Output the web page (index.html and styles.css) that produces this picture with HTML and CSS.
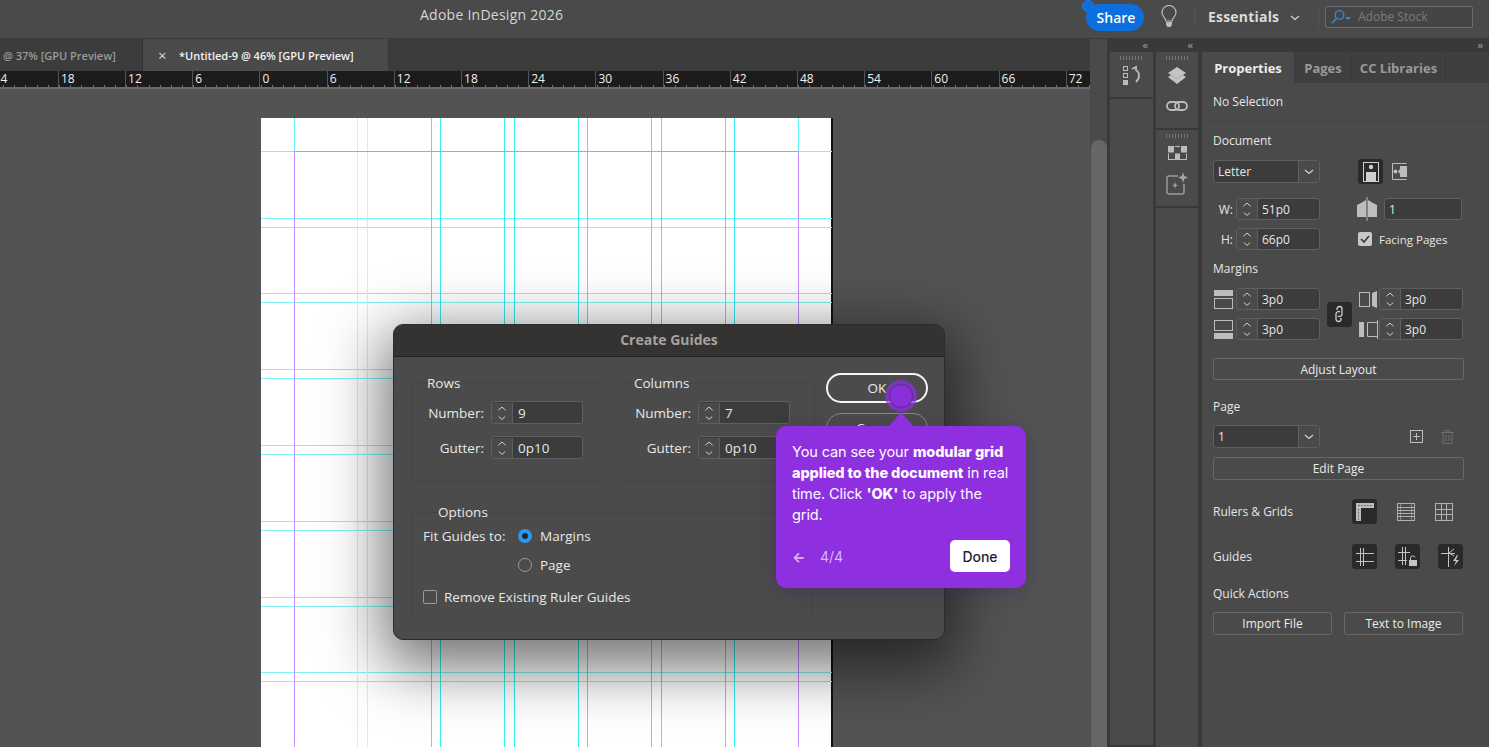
FILE: index.html
```html
<!DOCTYPE html>
<html lang="en">
<head>
<meta charset="utf-8">
<title>Adobe InDesign 2026</title>
<link rel="stylesheet" href="styles.css">
</head>
<body>
<svg class="defs" width="0" height="0">
  <symbol id="spin" viewBox="0 0 20 22"><path d="M6 8l4-3.5L14 8M6.500 15l3.500 3 3.500-3" fill="none" stroke="#d0d0d0" stroke-width="1.100"/></symbol>
  <symbol id="chev" viewBox="0 0 12 8"><path d="M2 2l4 3.500L10 2" fill="none" stroke="#d6d6d6" stroke-width="1.200"/></symbol>
</svg>

<header class="topbar">
  <div class="app-title">Adobe InDesign 2026</div>
  <button class="share"><span class="share-dot"></span>Share</button>
  <svg class="bulb" width="18" height="24" viewBox="0 0 18 24"><path d="M6 16c0-3-4-4-4-8.500a7 7 0 0 1 14 0C16 12 12 13 12 16z" fill="none" stroke="#bdbdbd" stroke-width="1.200"/><path d="M6 17h6v3l-1.500 2h-3L6 20z" fill="#bdbdbd"/></svg>
  <span class="top-sep sep-a"></span>
  <span class="workspace">Essentials</span>
  <svg class="work-chev" width="12" height="8"><use href="#chev"/></svg>
  <span class="top-sep sep-b"></span>
  <div class="stock">
    <svg width="22" height="16" viewBox="0 0 22 16"><circle cx="9.500" cy="6" r="4.300" fill="none" stroke="#2f8fe6" stroke-width="1.300"/><path d="M6.500 9.500L2 14" stroke="#2f8fe6" stroke-width="1.500"/><path d="M15 8h6l-3 3z" fill="#2f8fe6"/></svg>
    <span>Adobe Stock</span>
  </div>
</header>

<main class="workspace-area">
  <section class="document">
    <div class="tabs">
      <div class="tab tab-off">@ 37% [GPU Preview]</div>
      <div class="tab tab-on"><span class="tab-x">×</span>*Untitled-9 @ 46% [GPU Preview]</div>
    </div>
    <div class="ruler">
      <span class="tick tick-first">24</span><span class="tick">18</span><span class="tick">12</span><span class="tick">6</span><span class="tick">0</span><span class="tick">6</span><span class="tick">12</span><span class="tick">18</span><span class="tick">24</span><span class="tick">30</span><span class="tick">36</span><span class="tick">42</span><span class="tick">48</span><span class="tick">54</span><span class="tick">60</span><span class="tick">66</span><span class="tick">72</span>
    </div>
    <div class="canvas">
      <div class="page">
        <svg class="guides" width="572" height="629" viewBox="261 118 572 629">
          <g stroke="#7df3f6" stroke-width="1">
            <path d="M261 151.500H294M798 151.500H832"/>
            <path d="M261 218.500H832M261 227.500H832M261 293.500H832M261 302.500H832M261 369.500H832M261 378.500H832M261 445.500H832M261 454.500H832M261 521.500H832M261 530.500H832M261 597.500H832M261 606.500H832M261 672.500H832M261 681.500H832"/>
          </g>
          <g stroke="#b9f8fa" stroke-width="1">
            <path d="M357.500 118V747M367.500 118V747"/>
          </g>
          <g stroke="#35eef2" stroke-width="1">
            <path d="M431.500 118V747M440.500 118V747M504.500 118V747M514.500 118V747M578.500 118V747M587.500 118V747M651.500 118V747M661.500 118V747M725.500 118V747M734.500 118V747"/>
          </g>
          <path d="M294 151.500H798" stroke="#ea7cf0"/>
          <path d="M294.500 118V151" stroke="#5ef0f4"/>
          <path d="M294.500 151V747M798.500 151V747" stroke="#c98cff"/>
          <path d="M798.500 118V151" stroke="#5ef0f4"/>
        </svg>
      </div>
    </div>
  </section>

  <div class="scroll-col"><span class="scroll-thumb"></span></div>

  <aside class="dock">
    <div class="strip strip-one">
      <div class="collapse">‹‹</div>
      <div class="strip-group group-one">
        <span class="grip"></span>
        <svg width="20" height="22" viewBox="0 0 20 22"><g fill="none" stroke="#bcbcbc"><rect x="1.500" y="1.500" width="4" height="4"/><rect x="1.500" y="8.500" width="4" height="4"/></g><rect x="1" y="15" width="5" height="5" fill="#bcbcbc"/><path d="M10 4l4-2v3c3 2 5 7 0 12" fill="none" stroke="#bcbcbc" stroke-width="1.800"/></svg>
      </div>
    </div>
    <div class="strip strip-two">
      <div class="collapse">‹‹</div>
      <div class="strip-group group-two">
        <span class="grip"></span>
        <svg width="20" height="21" viewBox="0 0 20 21"><path d="M10 1l9 6-9 6-9-6z" fill="#c4c4c4"/><path d="M1 11l3-2 6 4 6-4 3 2-9 7z" fill="#c4c4c4"/></svg>
        <svg class="link-icon" width="22" height="12" viewBox="0 0 22 12"><g fill="none" stroke="#bcbcbc" stroke-width="1.800"><rect x="1" y="2" width="12" height="8" rx="4"/><rect x="9" y="2" width="12" height="8" rx="4"/></g></svg>
      </div>
      <div class="strip-group group-three">
        <span class="grip"></span>
        <svg width="19" height="14" viewBox="0 0 19 14"><rect x="0.500" y="0.500" width="18" height="13" fill="none" stroke="#bcbcbc"/><path d="M1 1h5v6H1zM12 1h6v6h-6zM7 7h5v6H7z" fill="#bcbcbc"/><path d="M6.500 0v7M12.500 0v7M0 7h19" stroke="#4a4a4a"/></svg>
        <svg class="spark" width="22" height="23" viewBox="0 0 22 23"><path d="M12 4H3a2 2 0 0 0-2 2v14a2 2 0 0 0 2 2h13a2 2 0 0 0 2-2v-8" fill="none" stroke="#9a9a9a" stroke-width="1.500"/><path d="M17 0l1.200 4 3.800 1.500-3.800 1.500L17 11l-1.200-4L12 5.500 15.800 4zM9 10l.8 2.500 2.200.8-2.200.8L9 17l-.8-2.900-2.200-.8 2.200-.8z" fill="#a8a8a8"/></svg>
      </div>
    </div>

    <div class="panel-wrap">
      <div class="collapse collapse-right">››</div>
      <div class="panel">
        <nav class="panel-tabs">
          <span class="ptab ptab-on">Properties</span>
          <span class="ptab ptab-pages">Pages</span>
          <span class="ptab ptab-libs">CC Libraries</span>
          <span class="ptab-fill"></span>
        </nav>

        <section class="sec sec-none"><span class="txt">No Selection</span></section>

        <section class="sec sec-doc">
          <h3 class="head">Document</h3>
          <div class="row first-row">
            <div class="select sel-letter"><span class="sel-val">Letter</span><span class="sel-btn"><svg width="12" height="8"><use href="#chev"/></svg></span></div>
            <div class="orient">
              <span class="icon-box box-orient"><svg width="16" height="20" viewBox="0 0 16 20"><rect x="0.500" y="0.500" width="15" height="19" fill="none" stroke="#cfcfcf"/><circle cx="8" cy="5" r="2.200" fill="#cfcfcf"/><path d="M3 19v-9h10v9z" fill="#cfcfcf"/></svg></span>
              <svg width="15" height="17" viewBox="0 0 15 17"><path d="M14.500.5H.5v16h14" fill="none" stroke="#bdbdbd"/><path d="M15 3H8v3L6 8.500 8 11v3h7z" fill="#bdbdbd"/><circle cx="3.500" cy="8.500" r="2" fill="#bdbdbd"/></svg>
            </div>
          </div>
          <div class="row">
            <div class="dim"><label class="dim-label">W:</label><div class="spin"><svg class="arrows" width="20" height="22"><use href="#spin"/></svg><span class="val">51p0</span></div></div>
            <svg class="pages-icon" width="20" height="24" viewBox="0 0 20 24"><path d="M9 3L4 6 0 8v12h9zM11 3l5 3 4 2v12h-9z" fill="#bdbdbd"/><path d="M10 0v24" stroke="#4b4b4b" stroke-width="2"/><path d="M10 0v24" stroke="#cfcfcf" stroke-width=".8"/></svg>
            <div class="plain-input"><span class="val">1</span></div>
          </div>
          <div class="row">
            <div class="dim"><label class="dim-label">H:</label><div class="spin"><svg class="arrows" width="20" height="22"><use href="#spin"/></svg><span class="val">66p0</span></div></div>
            <span class="check-on"><svg width="14" height="14" viewBox="0 0 14 14"><path d="M3 7l3 3 5-6" fill="none" stroke="#3e3e3e" stroke-width="1.700"/></svg></span>
            <span class="txt small">Facing Pages</span>
          </div>
          <h3 class="head margins-head">Margins</h3>
          <div class="margin-grid">
            <div class="dim"><svg class="m-icon" width="19" height="19" viewBox="0 0 19 19"><rect width="19" height="6" fill="#bdbdbd"/><rect x="0.500" y="8.500" width="18" height="10" fill="none" stroke="#bdbdbd"/></svg><div class="spin"><svg class="arrows" width="20" height="22"><use href="#spin"/></svg><span class="val">3p0</span></div></div>
            <span class="icon-box link-box"><svg width="10" height="18" viewBox="0 0 10 18"><g fill="none" stroke="#cfcfcf" stroke-width="1.300"><path d="M3 5V4a2.500 2.500 0 0 1 5 0v5a2.500 2.500 0 0 1-4 2"/><path d="M7 13v1a2.500 2.500 0 0 1-5 0V9a2.500 2.500 0 0 1 4-2"/></g></svg></span>
            <div class="dim"><svg class="m-icon" width="19" height="19" viewBox="0 0 19 19"><rect x="0.500" y="2.500" width="10" height="14" fill="none" stroke="#bdbdbd"/><path d="M13 3l5-2v17l-5-2z" fill="#bdbdbd"/></svg><div class="spin"><svg class="arrows" width="20" height="22"><use href="#spin"/></svg><span class="val">3p0</span></div></div>
            <div class="dim"><svg class="m-icon" width="19" height="19" viewBox="0 0 19 19"><rect x="0.500" y="0.500" width="18" height="10" fill="none" stroke="#bdbdbd"/><rect y="13" width="19" height="6" fill="#bdbdbd"/></svg><div class="spin"><svg class="arrows" width="20" height="22"><use href="#spin"/></svg><span class="val">3p0</span></div></div>
            <div class="dim"><svg class="m-icon" width="19" height="19" viewBox="0 0 19 19"><rect y="2" width="5" height="15" fill="#bdbdbd"/><path d="M18.500 2.500H8.500v14h10" fill="none" stroke="#bdbdbd"/><path d="M18.500 0v19" stroke="#bdbdbd"/></svg><div class="spin"><svg class="arrows" width="20" height="22"><use href="#spin"/></svg><span class="val">3p0</span></div></div>
          </div>
          <button class="btn btn-adjust">Adjust Layout</button>
        </section>

        <section class="sec sec-page">
          <h3 class="head">Page</h3>
          <div class="row page-row">
            <div class="select sel-page"><span class="sel-val">1</span><span class="sel-btn"><svg width="12" height="8"><use href="#chev"/></svg></span></div>
            <svg class="add-page" width="13" height="13" viewBox="0 0 13 13"><rect x="0.500" y="0.500" width="12" height="12" fill="none" stroke="#bdbdbd"/><path d="M6.500 3v7M3 6.500h7" stroke="#bdbdbd"/></svg>
            <svg class="trash" width="13" height="14" viewBox="0 0 13 14"><path d="M0 2.500h13M4.500 2V.5h4V2M2 3v10.500h9V3M5 5v6.500M8 5v6.500" fill="none" stroke="#6e6e6e"/></svg>
          </div>
          <button class="btn btn-edit">Edit Page</button>
        </section>

        <section class="sec sec-line sec-rulers">
          <span class="txt">Rulers &amp; Grids</span>
          <div class="tools tools-rulers">
            <span class="icon-box tool-box"><svg width="18" height="18" viewBox="0 0 18 18"><path d="M0 0h18v5H5v13H0z" fill="#bdbdbd"/><path d="M3 2v1M6 2v1M9 2v1M12 2v1M15 2v1M2 7h1M2 10h1M2 13h1M2 16h1" stroke="#2b2b2b"/></svg></span>
            <svg width="18" height="18" viewBox="0 0 18 18"><rect x="0.500" y="0.500" width="17" height="17" fill="none" stroke="#b0b0b0"/><path d="M0 4.500h18M0 7.500h18M0 10.500h18M0 13.500h18" stroke="#b0b0b0"/><path d="M3.500 0v18M14.500 0v18" stroke="#b0b0b0" stroke-width=".6"/></svg>
            <svg width="18" height="18" viewBox="0 0 18 18"><rect x="0.500" y="0.500" width="17" height="17" fill="none" stroke="#b0b0b0"/><path d="M6.500 0v18M11.500 0v18M0 6.500h18M0 11.500h18" stroke="#b0b0b0"/></svg>
          </div>
        </section>

        <section class="sec sec-line sec-guides">
          <span class="txt">Guides</span>
          <div class="tools tools-guides">
            <span class="icon-box tool-box"><svg width="18" height="18" viewBox="0 0 18 18"><path d="M4.500 0v18M7.500 0v18M0 5.500h18M0 13.500h18" stroke="#c4c4c4"/></svg></span>
            <span class="icon-box tool-box"><svg width="20" height="20" viewBox="0 0 20 20"><path d="M4.500 0v18M7.500 0v18M0 5.500h12M0 13.500h9" stroke="#c4c4c4"/><rect x="11" y="13" width="8" height="6" fill="#c4c4c4"/><path d="M12.500 13v-2a2.300 2.300 0 0 1 4.500-.5" fill="none" stroke="#c4c4c4"/></svg></span>
            <span class="icon-box tool-box"><svg width="20" height="20" viewBox="0 0 20 20"><path d="M7.500 0v20M0 6.500h14M8 6l5-4M8 6l5 3" fill="none" stroke="#c4c4c4"/><path d="M16 8l-4 6h3l-2 5 5-6h-3l2-5z" fill="#c4c4c4"/></svg></span>
          </div>
        </section>

        <section class="sec sec-actions">
          <h3 class="head">Quick Actions</h3>
          <div class="action-row">
            <button class="btn">Import File</button>
            <button class="btn">Text to Image</button>
          </div>
        </section>
      </div>
    </div>
  </aside>
</main>

<div class="dialog">
  <div class="dialog-title">Create Guides</div>
  <div class="dialog-body">
    <div class="dialog-left">
      <div class="dialog-top">
        <fieldset class="group group-rows">
          <legend>Rows</legend>
          <div class="field"><label>Number:</label><div class="spin d-spin"><svg class="arrows" width="20" height="22"><use href="#spin"/></svg><span class="val">9</span></div></div>
          <div class="field"><label>Gutter:</label><div class="spin d-spin"><svg class="arrows" width="20" height="22"><use href="#spin"/></svg><span class="val">0p10</span></div></div>
        </fieldset>
        <fieldset class="group group-cols">
          <legend>Columns</legend>
          <div class="field"><label>Number:</label><div class="spin d-spin"><svg class="arrows" width="20" height="22"><use href="#spin"/></svg><span class="val">7</span></div></div>
          <div class="field"><label>Gutter:</label><div class="spin d-spin"><svg class="arrows" width="20" height="22"><use href="#spin"/></svg><span class="val">0p10</span></div></div>
        </fieldset>
      </div>
      <fieldset class="group group-options">
        <legend>Options</legend>
        <div class="opt-row"><span class="opt-label">Fit Guides to:</span><span class="radio radio-on"></span><span>Margins</span></div>
        <div class="opt-row opt-page"><span class="radio"></span><span>Page</span></div>
        <div class="opt-row opt-remove"><span class="checkbox"></span><span>Remove Existing Ruler Guides</span></div>
      </fieldset>
    </div>
    <div class="dialog-btns">
      <button class="dbtn dbtn-ok">OK</button>
      <button class="dbtn">Cancel</button>
    </div>
  </div>
</div>

<div class="beacon"><span class="beacon-core"></span></div>
<div class="tip">
  <span class="tip-arrow"></span>
  <p class="tip-text">You can see your <b>modular grid applied to the document</b> in real time. Click <b>'OK'</b> to apply the grid.</p>
  <div class="tip-foot">
    <span class="tip-back">←</span>
    <span class="tip-count">4/4</span>
    <button class="tip-done">Done</button>
  </div>
</div>
</body>
</html>
```
FILE: styles.css
```css
* { box-sizing: border-box; }
html, body { margin: 0; height: 747px; overflow: hidden; }
body {
  width: 1489px;
  background: #4a4a4a;
  color: #e4e4e4;
  font-family: "Open Sans", "Noto Sans", sans-serif;
  font-size: 12px;
  display: flex;
  flex-direction: column;
}
.defs { position: absolute; }
button { font-family: inherit; }

/* top bar */
.topbar {
  height: 39px;
  flex: none;
  display: flex;
  align-items: center;
  background: #4a4a4a;
  border-bottom: 1px solid #3a3a3a;
}
.app-title { margin-left: 420px; width: 666px; font-size: 14px; color: #d6d6d6; margin-top: -9px; letter-spacing: .25px; }
.share {
  position: relative;
  width: 58px; height: 27px;
  margin-top: -4px;
  border: 0; border-radius: 14px;
  background: #0b6fdf;
  color: #fff;
  font-size: 14px; font-weight: 600;
  padding: 0 0 0 2px;
}
.share-dot { position: absolute; left: -4px; top: -4px; width: 12px; height: 12px; border-radius: 50%; background: #0b6fdf; border: 1px solid #1c79e4; }
.bulb { margin: -4px 0 0 16px; }
.top-sep { width: 1px; height: 22px; background: #555; margin-top: -4px; }
.sep-a { margin-left: 16px; }
.workspace { margin: -5px 0 0 13px; width: 71px; font-size: 14px; font-weight: 700; color: #dcdcdc; letter-spacing: .2px; }
.work-chev { margin: -3px 0 0 10px; }
.sep-b { margin-left: 17px; }
.stock {
  margin: -5px 0 0 6px;
  width: 148px; height: 22px;
  display: flex; align-items: center; gap: 6px;
  border: 1px solid #6c6c6c; border-radius: 2px;
  padding-left: 4px;
  color: #7b7b7b; font-size: 12px;
  background: #454545;
}

/* main */
.workspace-area { flex: 1; display: flex; min-height: 0; }
.document { width: 1090px; flex: none; display: flex; flex-direction: column; min-width: 0; }
.tabs { height: 32px; flex: none; display: flex; background: #3c3c3c; font-weight: 600; }
.tab { display: flex; align-items: center; white-space: nowrap; }
.tab-off { width: 143px; padding-left: 3px; color: #9a9a9a; border-right: 1px solid #333; font-size: 11px; }
.tab-on { width: 246px; background: #4a4a4a; color: #f2f2f2; border-right: 1px solid #383838; font-size: 11px; }
.tab-x { width: 36px; padding-left: 15px; font-size: 15px; font-weight: 400; color: #d6d6d6; }

.ruler {
  height: 18px; flex: none;
  display: flex;
  padding-left: 0;
  overflow: hidden;
  background-color: #1c1c1c;
  background-image:
    linear-gradient(#6a6a6a, #6a6a6a),
    repeating-linear-gradient(90deg, #8a8a8a 0 1px, transparent 1px 33.6px),
    repeating-linear-gradient(90deg, #777 0 1px, transparent 1px 11.2px);
  background-size: 100% 2px, 100% 4px, 100% 2px;
  background-position: 0 100%, 25.7px 16px, 3.300px 14px;
  background-repeat: no-repeat;
  border-bottom: 0;
}
.tick {
  flex: 0 0 67.2px;
  height: 16px;
  padding-left: 2px;
  border-left: 1px solid #555;
  color: #f0f0f0;
  font-size: 12px;
  line-height: 15px;
}
.tick-first { margin-left: -9.300px; }

.canvas { flex: 1; min-height: 0; background: #535353; padding: 29px 0 0 261px; overflow: hidden; }
.page { width: 572px; height: 629px; background: #fff; border-right: 2px solid #111; }
.guides { display: block; }

.scroll-col { position: relative; width: 17px; flex: none; background: #4a4a4a; }
.scroll-thumb { position: absolute; left: 1px; right: 0; top: 101px; bottom: 0; background: #666; border-radius: 8px 8px 0 0; }

/* dock */
.dock { flex: 1; display: flex; background: #393939; padding-left: 3px; }
.strip { display: flex; flex-direction: column; flex: none; background: #393939; }
.strip-one { width: 43px; }
.strip-two { width: 42px; margin-left: 3px; }
.collapse { height: 13px; line-height: 11px; text-align: right; padding-right: 6px; font-size: 11px; color: #a5a5a5; letter-spacing: -1px; flex: none; }
.strip-group { display: flex; flex-direction: column; align-items: center; background: #4a4a4a; flex: none; }
.group-one { height: 46px; border-bottom: 2px solid #393939; flex: 1; background: linear-gradient(#4a4a4a 0 45px, #393939 45px 47px, #4a4a4a 47px); }
.group-two { height: 78px; border-bottom: 2px solid #393939; }
.group-three { flex: 1; background: linear-gradient(#4a4a4a 0 76px, #393939 76px 78px, #4a4a4a 78px); }
.grip { width: 23px; height: 4px; margin: 4px 0 6px; background: repeating-linear-gradient(90deg, #777 0 1px, transparent 1px 3px); }
.group-one .grip { margin-bottom: 5px; }
.group-two .grip { margin-bottom: 6px; }
.link-icon { margin-top: 13px; }
.spark { margin-top: 12px; }
.group-three .grip { margin-bottom: 8px; }

.panel-wrap { width: 287px; flex: none; margin-left: 4px; display: flex; flex-direction: column; }
.collapse-right { font-size: 11px; padding-right: 7px; }
.panel { flex: 1; background: #4a4a4a; min-height: 0; }
.panel-tabs { height: 31px; display: flex; align-items: stretch; font-size: 13px; font-weight: 700; background: #3f3f3f; }
.ptab { display: flex; align-items: center; justify-content: center; color: #9a9a9a; border-right: 1px solid #393939; }
.ptab-on { width: 93px; background: #4a4a4a; color: #ececec; }
.ptab-pages { width: 57px; }
.ptab-libs { width: 94px; }
.ptab-fill { flex: 1; }

.sec { padding: 0 25px 0 11px; border-bottom: 1px solid #454545; }
.txt { font-size: 12px; color: #e6e6e6; }
.small { font-size: 11.500px; margin-left: 7px; }
.head { margin: 0; font-size: 12px; font-weight: 400; line-height: 16px; color: #e6e6e6; }
.sec-none { height: 38px; display: flex; align-items: center; }
.sec-doc { height: 267px; padding-top: 12px; }
.row { display: flex; align-items: center; height: 22px; margin-top: 8px; }
.first-row { margin-top: 11px; height: 23px; margin-bottom: 15px; }
.select { display: flex; height: 23px; border: 1px solid #5f5f5f; border-radius: 3px; width: 107px; background: #3c3c3c; }
.sel-val { flex: 1; padding-left: 4px; line-height: 21px; font-size: 12px; color: #e6e6e6; }
.sel-btn { width: 21px; display: flex; align-items: center; justify-content: center; background: #4a4a4a; border-left: 1px solid #5f5f5f; border-radius: 0 3px 3px 0; }
.orient { display: flex; align-items: center; margin-left: 38px; gap: 9px; }
.icon-box { display: flex; align-items: center; justify-content: center; background: #2a2a2a; border-radius: 3px; }
.box-orient { width: 25px; height: 25px; }
.dim { display: flex; align-items: center; justify-content: flex-end; width: 107px; }
.dim-label { font-size: 12px; margin-right: 3px; color: #e6e6e6; }
.spin { display: flex; align-items: center; width: 84px; height: 22px; border: 1px solid #5f5f5f; border-radius: 3px; background: #3c3c3c; overflow: hidden; }
.arrows { flex: none; background: #4a4a4a; border-right: 1px solid #5f5f5f; width: 21px; height: 20px; }
.val { padding-left: 4px; font-size: 12px; color: #e6e6e6; }
.pages-icon { margin-left: 37px; flex: none; }
.plain-input { width: 78px; height: 22px; margin-left: 7px; border: 1px solid #5f5f5f; border-radius: 3px; background: #3c3c3c; display: flex; align-items: center; }
.check-on { width: 14px; height: 14px; margin-left: 38px; background: #c8c8c8; border-radius: 2px; display: flex; }
.margins-head { margin-top: 11px; }
.margin-grid { display: grid; grid-template-columns: 107px 38px 105px; grid-template-rows: 22px 22px; gap: 8px 0; margin-top: 11px; }
.margin-grid .dim { justify-content: space-between; }
.margin-grid .dim:nth-of-type(n) { width: 107px; }
.link-box { grid-row: 1 / 3; grid-column: 2; width: 25px; height: 25px; align-self: center; justify-self: center; }
.margin-grid > .dim:nth-child(3) { width: 105px; }
.margin-grid > .dim:nth-child(5) { width: 105px; }
.m-icon { flex: none; margin-left: 1px; }
.btn {
  height: 23px; width: 100%;
  background: #4a4a4a; color: #ececec;
  border: 1px solid #666; border-radius: 2px;
  font-size: 12px; font-weight: 400; padding: 0;
}
.btn-adjust { margin-top: 18px; height: 22px; }
.sec-page { height: 102px; padding-top: 11px; }
.page-row { margin-top: 10px; height: 23px; }
.add-page { margin-left: 90px; flex: none; }
.trash { margin-left: 18px; flex: none; }
.btn-edit { margin-top: 9px; }
.sec-line { display: flex; align-items: center; justify-content: space-between; padding-right: 25px; }
.sec-rulers { height: 44px; }
.sec-guides { height: 46px; }
.tools { display: flex; align-items: center; }
.tools-rulers { width: 112px; gap: 20px; }
.tools-guides { width: 112px; gap: 18px; }
.tool-box { width: 25px; height: 25px; flex: none; }
.tools-rulers { justify-content: flex-start; }
.sec-actions { border: 0; padding-top: 6px; }
.action-row { display: grid; grid-template-columns: 119px 119px; gap: 12px; margin-top: 10px; }

/* dialog */
.dialog {
  position: absolute; left: 393px; top: 324px;
  width: 552px; height: 316px;
  background: #4b4b4b;
  border: 1px solid #2c2c2c;
  border-radius: 10px;
  box-shadow: 0 18px 60px 10px rgba(0,0,0,.55);
  overflow: hidden;
}
.dialog-title {
  height: 32px;
  background: #353331;
  border-bottom: 1px solid #1f1f1f;
  text-align: center;
  line-height: 30px;
  font-size: 14px; font-weight: 700;
  color: #a3a3a3;
}
.dialog-body { display: flex; padding: 16px 0 0 17px; }
.dialog-left { width: 404px; flex: none; }
.dialog-top { display: flex; gap: 12px; }
.group { margin: 0; padding: 0; border: 1px solid #464646; border-radius: 2px; min-width: 0; }
.group legend { margin-left: 15px; padding: 0; font-size: 13.500px; line-height: 20px; color: #e8e8e8; }
.group-rows { width: 195px; height: 108px; }
.group-cols { width: 197px; height: 108px; }
.field { display: flex; align-items: center; gap: 7px; margin-top: 12px; }
.group .field:first-of-type { margin-top: 8px; }
.field label { width: 72px; text-align: right; font-size: 13.500px; color: #e8e8e8; }
.d-spin { width: 92px; height: 23px; }
.d-spin .val { font-size: 13.500px; padding-left: 5px; }
.group-options { width: 402px; height: 118px; margin-top: 21px; padding: 4px 0 0 11px; }
.opt-row { display: flex; align-items: center; height: 20px; font-size: 13.500px; color: #e8e8e8; }
.opt-label { width: 95px; }
.opt-row .radio { margin-right: 8px; }
.opt-page { margin-top: 9px; padding-left: 95px; }
.opt-remove { margin-top: 12px; }
.radio { width: 14px; height: 14px; border-radius: 50%; border: 1px solid #9a9a9a; flex: none; }
.radio-on { border: 4px solid #2b97ee; background: #26292c; }
.checkbox { width: 14px; height: 14px; border: 1px solid #9a9a9a; border-radius: 2px; margin-right: 7px; flex: none; }
.dialog-btns { display: flex; flex-direction: column; gap: 10px; margin: 0 0 0 11px; }
.dbtn { width: 102px; height: 30px; border-radius: 15px; border: 1px solid #8a8a8a; background: #4b4b4b; color: #eee; font-size: 13.500px; padding: 0; }
.dbtn-ok { border: 2.500px solid #f4f4f4; }

/* product tour tip */
.beacon {
  position: absolute; left: 885px; top: 380px;
  width: 32px; height: 32px;
  border-radius: 50%;
  background: rgba(142, 45, 226, .7);
  display: flex; align-items: center; justify-content: center;
}
.beacon-core { width: 24px; height: 24px; border-radius: 50%; background: #8a2fdc; border: 1px solid #5a2a88; }
.tip {
  position: absolute; left: 776px; top: 426px;
  width: 250px; height: 162px;
  padding: 15px 16px 0;
  background: #8e30e0;
  border-radius: 10px;
  color: #fdf9ff;
  box-shadow: 0 4px 20px rgba(60, 20, 110, .3);
  font-family: "Lato", "Open Sans", sans-serif;
}
.tip-arrow { position: absolute; left: 113px; top: -14px; width: 0; height: 0; border-left: 12px solid transparent; border-right: 12px solid transparent; border-bottom: 14px solid #8e30e0; }
.tip-text { margin: 0; font-size: 14.500px; line-height: 21px; font-family: Inter, "Open Sans", sans-serif; letter-spacing: -.1px; }
.tip-text b { font-weight: 800; }
.tip-foot { display: flex; align-items: center; margin-top: 15px; height: 32px; color: #d7b8f5; font-family: Inter, sans-serif; font-size: 14px; }
.tip-back { width: 28px; font-size: 14px; font-weight: 700; }
.tip-count { flex: 1; }
.tip-done { width: 60px; height: 32px; border: 0; border-radius: 5px; background: #fff; color: #1c1c3c; font-family: Inter, sans-serif; font-size: 14px; font-weight: 500; padding: 0; }
```
